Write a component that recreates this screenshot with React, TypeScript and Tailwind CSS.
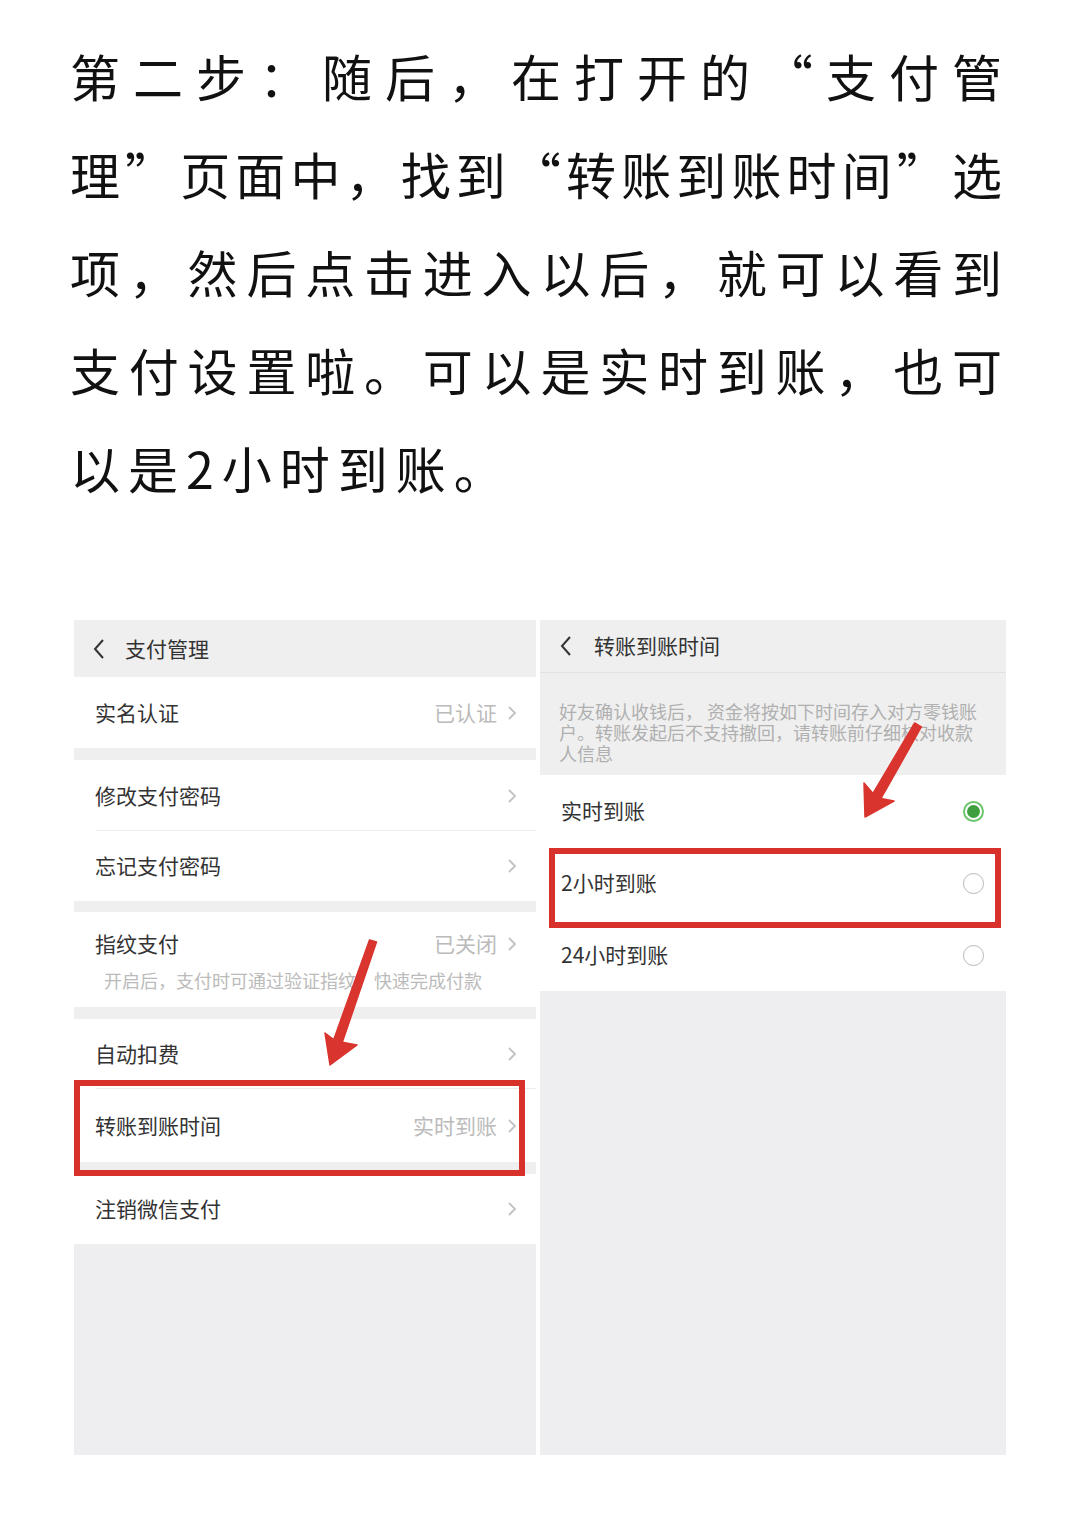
import React from "react";

const FONT = { fontFamily: '"Noto Sans CJK SC", "Noto Sans", sans-serif' };

const lines = [
  "第二步：随后，在打开的“支付管",
  "理”页面中，找到“转账到账时间”选",
  "项，然后点击进入以后，就可以看到",
  "支付设置啦。可以是实时到账，也可",
];

const Chevron = () => (
  <svg width="10" height="16" viewBox="0 0 10 16" className="shrink-0">
    <path d="M2 2 L8 8 L2 14" stroke="#c2c2c2" strokeWidth="1.8" fill="none" />
  </svg>
);

const Back = () => (
  <svg width="14" height="22" viewBox="0 0 14 22" className="shrink-0">
    <path d="M11 2 L3 11 L11 20" stroke="#333" strokeWidth="2" fill="none" />
  </svg>
);

const Row = ({
  label,
  value,
  h,
  divider,
}: {
  label: string;
  value?: string;
  h: string;
  divider?: boolean;
}) => (
  <div className={`relative flex items-center justify-between bg-white pl-[21px] pr-[19px] ${h}`}>
    <span className="text-[21px] text-[#333]">{label}</span>
    <div className="flex items-center gap-[10px]">
      {value && <span className="text-[21px] text-[#bbb]">{value}</span>}
      <Chevron />
    </div>
    {divider && <div className="absolute bottom-0 left-[22px] right-0 h-px bg-[#ececec]" />}
  </div>
);

const Radio = ({ on }: { on?: boolean }) =>
  on ? (
    <div className="flex h-[21px] w-[21px] items-center justify-center rounded-full border-2 border-[#6cc46c]">
      <div className="h-[13px] w-[13px] rounded-full bg-[#3f9f3f]" />
    </div>
  ) : (
    <div className="h-[21px] w-[21px] rounded-full border-[1.5px] border-[#b8b8b8]" />
  );

const Option = ({ label, on }: { label: string; on?: boolean }) => (
  <div className="flex h-[72px] items-center justify-between bg-white pl-[21px] pr-[22px]">
    <span className="text-[21px] text-[#333]">{label}</span>
    <Radio on={on} />
  </div>
);

const Gap = ({ h }: { h: string }) => <div className={`bg-[#efefef] ${h}`} />;

export default function App() {
  return (
    <div lang="zh-CN" className="relative h-[1515px] w-[1080px] overflow-hidden bg-white" style={FONT}>
      {/* article text */}
      <div className="w-[1003px] pl-[70px] pt-[26px] text-[50px] leading-[98px] text-[#111]">
        {lines.map((l) => (
          <div key={l} className="whitespace-nowrap text-justify tracking-[1px] [text-align-last:justify]">
            {l}
          </div>
        ))}
        <div className="tracking-[8px]">以是2小时到账。</div>
      </div>

      {/* screenshots */}
      <div className="mt-[104px] flex gap-[4px] pl-[74px]">
        {/* left: 支付管理 */}
        <div className="flex h-[835px] w-[462px] flex-col bg-[#eeedf0]">
          <div className="flex h-[57px] items-center gap-[19px] bg-[#efefef] pl-[18px]">
            <Back />
            <span className="text-[21px] text-[#333]">支付管理</span>
          </div>
          <Row label="实名认证" value="已认证" h="h-[71px]" />
          <Gap h="h-[12px]" />
          <Row label="修改支付密码" h="h-[71px]" divider />
          <Row label="忘记支付密码" h="h-[70px]" />
          <Gap h="h-[11px]" />
          <div className="flex h-[95px] flex-col bg-white pl-[21px] pr-[19px] pt-[16px]">
            <div className="flex items-center justify-between">
              <span className="text-[21px] text-[#333]">指纹支付</span>
              <div className="flex items-center gap-[10px]">
                <span className="text-[21px] text-[#bbb]">已关闭</span>
                <Chevron />
              </div>
            </div>
            <span className="mt-[8px] pl-[9px] text-[18px] leading-[24px] text-[#bbb]">开启后，支付时可通过验证指纹，快速完成付款</span>
          </div>
          <Gap h="h-[12px]" />
          <Row label="自动扣费" h="h-[70px]" divider />
          <Row label="转账到账时间" value="实时到账" h="h-[73px]" />
          <Gap h="h-[12px]" />
          <Row label="注销微信支付" h="h-[70px]" />
        </div>

        {/* right: 转账到账时间 */}
        <div className="flex h-[835px] w-[466px] flex-col bg-[#eeedf0]">
          <div className="flex h-[53px] items-center gap-[21px] border-b border-[#e2e2e2] bg-[#efefef] pl-[19px]">
            <Back />
            <span className="text-[21px] text-[#333]">转账到账时间</span>
          </div>
          <div className="h-[102px] bg-[#efefef] pl-[19px] pt-[28px] text-[18px] leading-[21px] text-[#b0b0b0]">
            好友确认收钱后， 资金将按如下时间存入对方零钱账
            <br />
            户。转账发起后不支持撤回，请转账前仔细核对收款
            <br />
            人信息
          </div>
          <Option label="实时到账" on />
          <Option label="2小时到账" />
          <Option label="24小时到账" />
        </div>
      </div>

      {/* red highlight boxes */}
      <div className="absolute left-[74px] top-[1080px] h-[96px] w-[451px] border-[6px] border-[#d8312c]" />
      <div className="absolute left-[549px] top-[848px] h-[80px] w-[452px] border-[6px] border-[#d8312c]" />

      {/* red arrows */}
      <svg className="pointer-events-none absolute left-0 top-0" width="1080" height="1515" viewBox="0 0 1080 1515">
        <polygon
          points="376.5,942 342.3,1042.3 357,1045 330,1065 325,1033 333.7,1039.7 369.5,940"
          fill="#d9342e"
          stroke="#d9342e"
          strokeWidth="1.5"
          strokeLinejoin="round"
        />
        <polygon
          points="921.3,727 881,798.5 894,801 865,817 864,783 873,793.5 914.7,723"
          fill="#d9342e"
          stroke="#d9342e"
          strokeWidth="1.5"
          strokeLinejoin="round"
        />
      </svg>
    </div>
  );
}
